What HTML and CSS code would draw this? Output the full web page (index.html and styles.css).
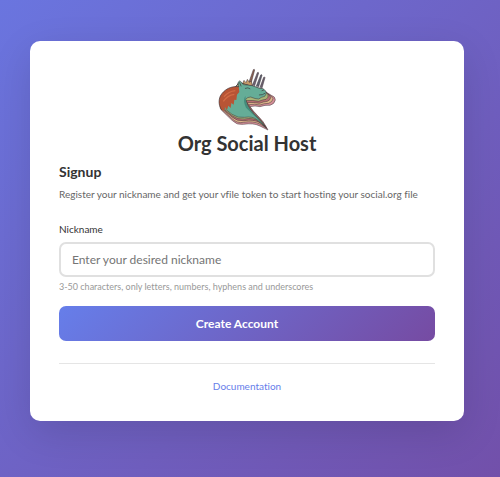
FILE: index.html
```
<!DOCTYPE html>
<html lang="en">
<head>
  <meta charset="UTF-8">
  <meta name="viewport" content="width=device-width, initial-scale=1.0">
  <title>Org Social Host</title>
  <link rel="stylesheet" href="styles.css">
</head>
<body>
  <main class="container">
    <header class="header">
      <svg class="logo" viewBox="22 18 178 189" role="img" aria-label="Org Social logo">
        <g stroke="#3c3338" stroke-width="1.5" stroke-linejoin="round" stroke-linecap="round">
          <!-- horns -->
          <path fill="#8a5f50" d="M114 68l16-45q3-3 4 1l-12 45z"/>
          <path fill="#6c6170" d="M127 70l15-38q3-3 4 1l-12 38z"/>
          <path fill="#5d6170" d="M139 72l13-33q3-3 4 1l-10 34z"/>
          <path fill="#6c6170" d="M150 76l11-30q3-3 4 1l-9 31z"/>
          <path fill="#c69a68" d="M97 66l5-11 6 7 4-10 6 9 6-4 3 14z"/>
          <!-- stacked layers, back to front -->
          <path fill="#d58f98" d="M34 144L66 175Q80 190 100 187Q130 182 150 192L174 204Q160 176 142 160Q130 148 120 134Q135 130 150 134Q165 128 180 130Q194 126 196 114Q196 104 184 100L165 88 88 62z"/>
          <path fill="#dfb68b" d="M32 140L66 170Q82 185 100 181Q130 176 152 187L171 200Q156 174 138 158Q124 144 116 128Q135 125 150 129Q162 124 176 124Q188 120 189 110Q186 101 176 98L160 86 88 62z"/>
          <path fill="#b96f72" d="M32 137L66 165Q82 179 102 176Q130 171 150 182L169 198Q152 172 134 156Q120 142 112 122Q132 120 148 124Q160 119 172 118Q182 114 182 106Q180 98 172 95L160 84 88 62z"/>
          <path fill="#a9b478" d="M32 134L66 161Q84 174 104 171Q130 166 146 178L167 195Q148 170 130 154Q116 140 108 116Q130 114 146 118Q158 113 168 112Q177 106 174 98L160 82 88 62z"/>
          <!-- head and neck -->
          <path fill="#65ad97" d="M32 130L66 157Q84 169 104 166Q128 162 142 174L164 192Q144 168 128 152Q109 132 107 112Q112 105 122 105Q136 111 146 111Q154 105 164 103Q171 96 168 88Q160 76 148 79Q128 68 100 68L90 56 84 61 86 72z"/>
          <path fill="#438b7c" stroke="none" d="M106 102Q97 116 108 137L140 168 162 190Q144 168 128 152Q109 132 107 112z"/>
        </g>
        <!-- mane -->
        <path fill="#b85435" d="M86 74C64 71 42 82 31 102C24 118 28 134 34 143L42 146 45 136 51 144 55 131 62 138 64 123 71 128 73 113 79 114 81 98 88 90z"/>
        <path fill="none" stroke="#d26b45" stroke-width="4" d="M42 104q14-16 34-18M40 118q12-18 33-21"/>
        <g fill="none" stroke="#3c3338" stroke-width="2" stroke-linecap="round">
          <path d="M86 74C64 71 42 82 31 102C24 118 28 134 34 143"/>
          <path d="M89 62l4 10M106 79q8-4 14 1M156 86l5-2M148 99q10 1 17-5"/>
        </g>
      </svg>
      <h1>Org Social Host</h1>
    </header>
    <h2>Signup</h2>
    <p class="description">Register your nickname and get your vfile token to start hosting your social.org file</p>
    <form class="signup-form">
      <label for="nickname">Nickname</label>
      <input type="text" id="nickname" name="nickname" placeholder="Enter your desired nickname" aria-describedby="nickname-hint">
      <small id="nickname-hint">3-50 characters, only letters, numbers, hyphens and underscores</small>
      <button type="submit">Create Account</button>
    </form>
    <footer class="footer">
      <a href="#">Documentation</a>
    </footer>
  </main>
</body>
</html>
```
FILE: styles.css
```
* {
  box-sizing: border-box;
  margin: 0;
  padding: 0;
}
body {
  min-height: 100vh;
  padding: 41px 36px 56px 30px;
  font-family: Lato, "Noto Sans", sans-serif;
  font-size: 10px;
  line-height: 16px;
  font-variant-ligatures: none;
  color: #333;
  background: linear-gradient(135deg, #6a75df 0%, #7250aa 100%);
}
.container {
  max-width: 480px;
  margin: 0 auto;
  padding: 27px 29px;
  background: #fff;
  border-radius: 10px;
  box-shadow: 0 12px 40px rgba(0, 0, 0, 0.12);
}
.header {
  text-align: center;
}
.logo {
  display: block;
  width: 60px;
  height: 63px;
  margin: 0 auto;
}
h1 {
  font-size: 20px;
  line-height: 24px;
}
h2 {
  margin-top: 8px;
  font-size: 14px;
  line-height: 18px;
}
.description {
  margin-top: 4px;
  line-height: 18px;
  color: #666;
}
.signup-form {
  display: flex;
  flex-direction: column;
  margin-top: 18px;
}
input {
  height: 35px;
  margin-top: 5px;
  padding: 0 11px;
  font-family: inherit;
  font-size: 12px;
  border: 2px solid #e0e0e0;
  border-radius: 7px;
}
input::placeholder {
  color: #757575;
}
input:focus {
  outline: none;
  border-color: #667eea;
}
small {
  margin-top: 3px;
  font-size: 9px;
  line-height: 14px;
  color: #999;
}
button {
  height: 35px;
  margin-top: 12px;
  padding-right: 20px;
  font-family: inherit;
  font-size: 12px;
  font-weight: 700;
  color: #fff;
  background: linear-gradient(135deg, #667eea 0%, #764ba2 100%);
  border: none;
  border-radius: 7px;
  cursor: pointer;
}
.footer {
  margin-top: 22px;
  padding-top: 14px;
  text-align: center;
  border-top: 1px solid #e5e5e5;
}
.footer a {
  color: #667eea;
  text-decoration: none;
}
```
